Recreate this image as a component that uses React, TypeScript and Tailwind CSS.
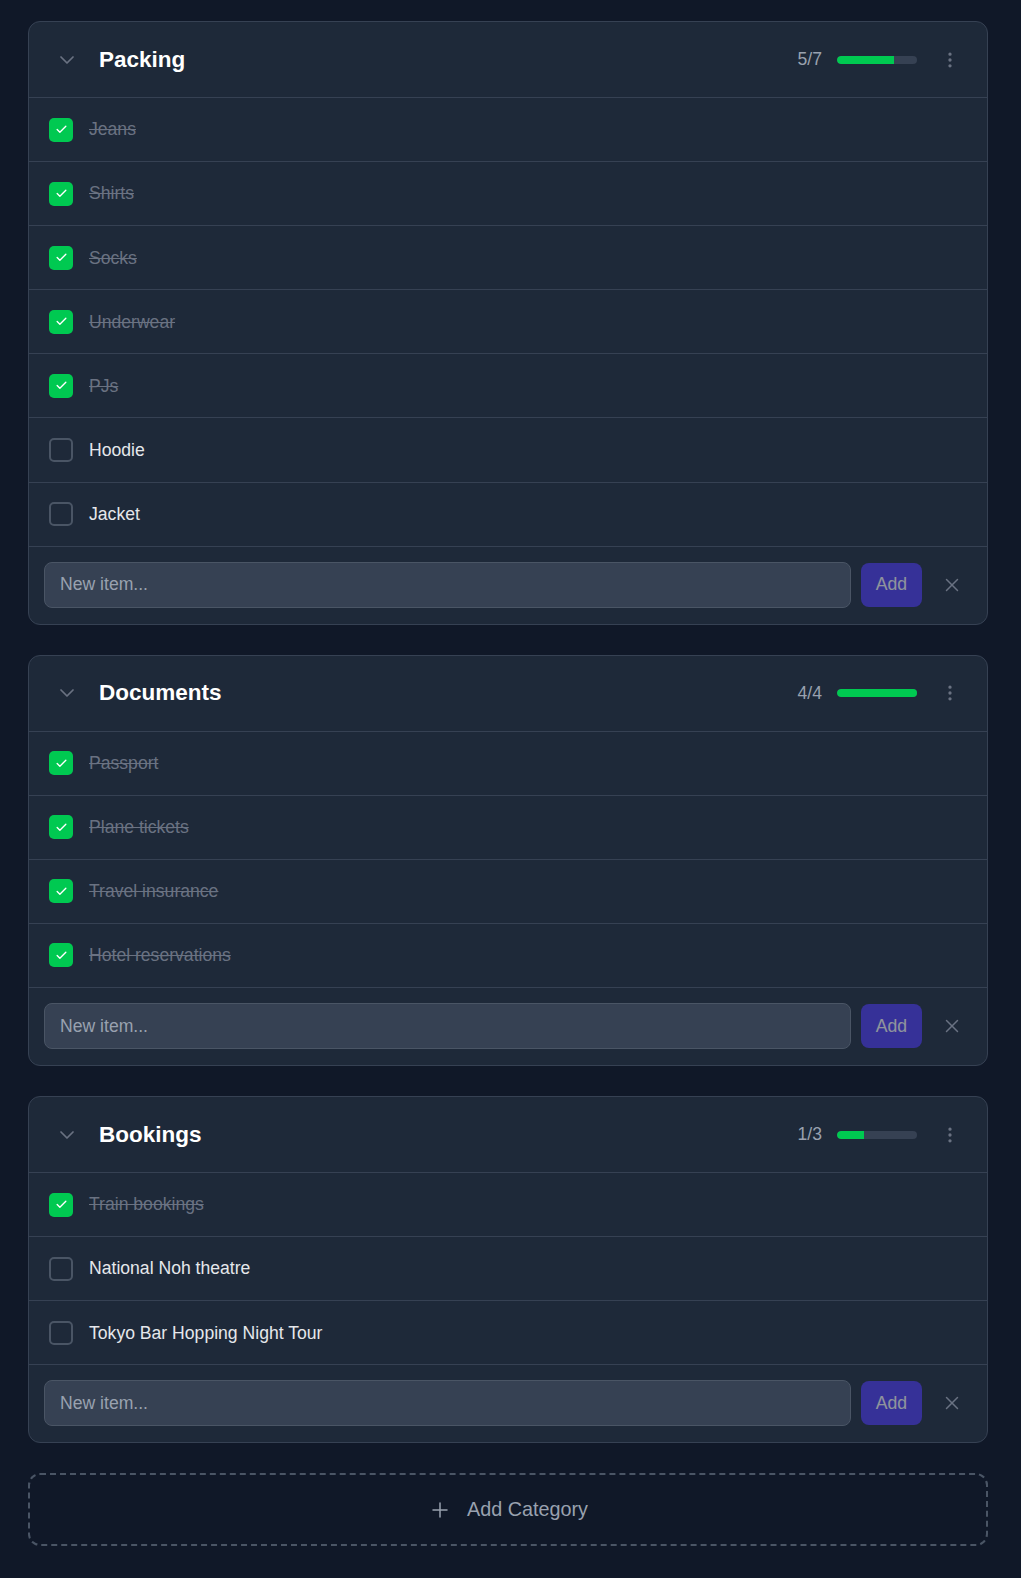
import React, { useState } from 'react';
import { ChevronDown, EllipsisVertical, X, Plus, Check } from 'lucide-react';

type Item = { id: number; text: string; done: boolean };
type Category = { id: number; name: string; items: Item[] };

const initial: Category[] = [
  {
    id: 1,
    name: 'Packing',
    items: [
      { id: 1, text: 'Jeans', done: true },
      { id: 2, text: 'Shirts', done: true },
      { id: 3, text: 'Socks', done: true },
      { id: 4, text: 'Underwear', done: true },
      { id: 5, text: 'PJs', done: true },
      { id: 6, text: 'Hoodie', done: false },
      { id: 7, text: 'Jacket', done: false },
    ],
  },
  {
    id: 2,
    name: 'Documents',
    items: [
      { id: 1, text: 'Passport', done: true },
      { id: 2, text: 'Plane tickets', done: true },
      { id: 3, text: 'Travel insurance', done: true },
      { id: 4, text: 'Hotel reservations', done: true },
    ],
  },
  {
    id: 3,
    name: 'Bookings',
    items: [
      { id: 1, text: 'Train bookings', done: true },
      { id: 2, text: 'National Noh theatre', done: false },
      { id: 3, text: 'Tokyo Bar Hopping Night Tour', done: false },
    ],
  },
];

const CategoryCard: React.FC<{ category: Category; onToggle: (itemId: number) => void }> = ({ category, onToggle }) => {
  const [draft, setDraft] = useState('');
  const done = category.items.filter((i) => i.done).length;
  const total = category.items.length;
  const pct = total ? (done / total) * 100 : 0;

  return (
    <div className="w-[960px] bg-gray-800 border border-gray-700 rounded-xl overflow-hidden">
      {/* header */}
      <div className="h-[75px] flex items-center pl-[26px] pr-[23px]">
        <button className="w-6 h-6 flex items-center justify-center text-gray-500">
          <ChevronDown size={24} strokeWidth={1.75} />
        </button>
        <h2 className="ml-5 text-[22.5px] font-bold text-white">{category.name}</h2>
        <div className="ml-auto flex items-center">
          <span className="text-[17.6px] text-gray-400">
            {done}/{total}
          </span>
          <div className="ml-[15px] w-20 h-2 rounded-full bg-gray-700 overflow-hidden">
            <div className="h-full bg-green-500 rounded-l-full" style={{ width: `${pct}%` }} />
          </div>
          <button className="ml-[19px] w-7 h-7 flex items-center justify-center text-gray-500">
            <EllipsisVertical size={20} strokeWidth={2} />
          </button>
        </div>
      </div>

      {/* items */}
      {category.items.map((item) => (
        <div key={item.id} className="h-[64.1px] border-t border-gray-700 flex items-center pl-5 pr-5 gap-4">
          <button
            onClick={() => onToggle(item.id)}
            className={
              item.done
                ? 'w-6 h-6 rounded-[5px] bg-green-500 flex items-center justify-center text-white'
                : 'w-6 h-6 rounded-[5px] border-2 border-gray-600 flex items-center justify-center'
            }
          >
            {item.done && <Check size={13} strokeWidth={2.5} />}
          </button>
          <span
            className={
              item.done ? 'text-[17.6px] text-gray-500 line-through' : 'text-[17.6px] text-gray-200'
            }
          >
            {item.text}
          </span>
        </div>
      ))}

      {/* new item */}
      <div className="border-t border-gray-700 flex items-center pl-[15px] pr-[15px] pt-[15px] pb-4">
        <input
          value={draft}
          onChange={(e) => setDraft(e.target.value)}
          placeholder="New item..."
          className="flex-1 h-[46px] px-[15px] rounded-lg bg-gray-700 border border-gray-600 text-[17.6px] text-gray-100 placeholder:text-gray-400 outline-none"
        />
        <button className="ml-[10px] w-[61px] h-11 rounded-lg bg-indigo-600 opacity-50 text-white text-[17.6px]">
          Add
        </button>
        <button className="ml-[10px] w-10 h-10 flex items-center justify-center text-gray-500">
          <X size={22} strokeWidth={1.6} />
        </button>
      </div>
    </div>
  );
};

const App: React.FC = () => {
  const [categories, setCategories] = useState<Category[]>(initial);

  const toggle = (catId: number, itemId: number) => {
    setCategories((cs) =>
      cs.map((c) =>
        c.id !== catId
          ? c
          : { ...c, items: c.items.map((i) => (i.id === itemId ? { ...i, done: !i.done } : i)) }
      )
    );
  };

  return (
    <div className="min-h-screen bg-gray-900 font-['Liberation_Sans',Arial,sans-serif]">
      <div className="pl-7 pt-[21px] pb-10 flex flex-col gap-[30px]">
        {categories.map((c) => (
          <CategoryCard key={c.id} category={c} onToggle={(id) => toggle(c.id, id)} />
        ))}

        <button className="w-[960px] h-[73px] rounded-xl border-2 border-dashed border-gray-600 flex items-center justify-center gap-[15px] text-gray-400">
          <Plus size={24} strokeWidth={1.5} />
          <span className="text-[19.8px]">Add Category</span>
        </button>
      </div>
    </div>
  );
};

export default App;
